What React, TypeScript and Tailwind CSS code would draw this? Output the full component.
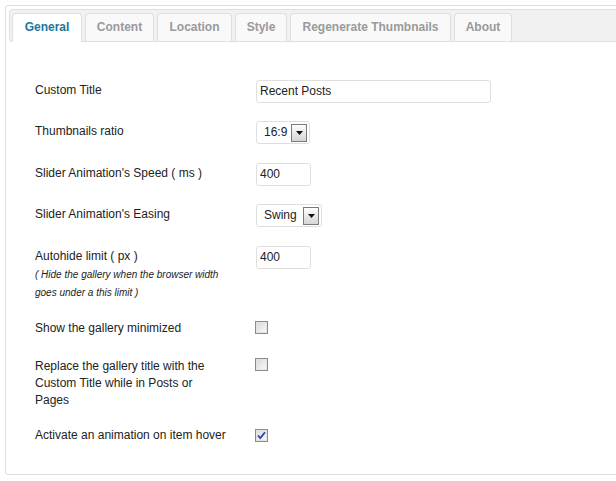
import React from 'react';

const TABS = [
  { name: 'General', w: 'w-[70px]' },
  { name: 'Content', w: 'w-[69px]' },
  { name: 'Location', w: 'w-[75px]' },
  { name: 'Style', w: 'w-[52px]' },
  { name: 'Regenerate Thumbnails', w: 'w-[161px]' },
  { name: 'About', w: 'w-[58px]' },
];

// old-school select box with the little grey dropdown button
const FakeSelect = ({ value, width }: { value: string; width: string }) => (
  <div className={`flex h-[23px] items-center justify-between rounded-[3px] border border-[#dfdfdf] bg-white pl-[7px] pr-[2px] ${width}`}>
    <span className="text-[12px] text-[#222]">{value}</span>
    <span className="flex h-[18px] w-[16px] items-center justify-center border border-[#7a7a7a] bg-gradient-to-b from-white to-[#d4d4d4]">
      <svg width="7" height="4" viewBox="0 0 7 4">
        <path d="M0 0h7L3.5 4z" fill="#111" />
      </svg>
    </span>
  </div>
);

const Checkbox = ({ checked = false }: { checked?: boolean }) => (
  <span className="flex h-[13px] w-[13px] items-center justify-center border border-[#8a8b8b] bg-gradient-to-br from-[#d8d8d8] to-[#fbfbfb] shadow-[inset_0_0_0_1px_#e4e4e4]">
    {checked && (
      <svg width="9" height="9" viewBox="0 0 9 9">
        <path d="M1 4.5 L3.3 7 L8 1.2" fill="none" stroke="#2b45a6" strokeWidth="1.8" />
      </svg>
    )}
  </span>
);

const TextInput = ({ value, width }: { value: string; width: string }) => (
  <div className={`flex h-[23px] items-center rounded-[3px] border border-[#dfdfdf] bg-white pl-[3px] text-[12px] text-[#222] ${width}`}>
    {value}
  </div>
);

export default function App() {
  return (
    <div className="h-[481px] w-[616px] overflow-hidden bg-white font-['Liberation_Sans',Arial,sans-serif] text-[12px] leading-[17px] text-[#222]">
      <div className="ml-[5px] mt-[5px] h-[470px] w-[640px] rounded-[3px] border border-[#dfdfdf] p-[3px]">
        {/* tab strip */}
        <div className="flex h-[33px] items-end gap-[3px] rounded-[3px] border border-[#dfdfdf] bg-[#f1f1f1] pl-[2px]">
          {TABS.map((t, i) =>
            i === 0 ? (
              <div
                key={t.name}
                className={`-mb-px flex h-[29px] items-center justify-center rounded-t-[4px] border border-b-0 border-[#dfdfdf] bg-white pb-px font-bold text-[#21759b] ${t.w}`}
              >
                {t.name}
              </div>
            ) : (
              <div
                key={t.name}
                className={`flex h-[28px] items-center justify-center whitespace-nowrap rounded-t-[4px] border border-b-0 border-[#dfdfdf] bg-[#f9f9f9] font-bold text-[#9a9a9a] ${t.w}`}
              >
                {t.name}
              </div>
            )
          )}
        </div>

        {/* settings rows */}
        <div className="mt-[38px] pl-[26px]">
          <div className="flex h-[41px]">
            <div className="w-[221px] pr-[31px] pt-[2px]">Custom Title</div>
            <TextInput value="Recent Posts" width="w-[235px]" />
          </div>

          <div className="flex h-[42px]">
            <div className="w-[221px] pr-[31px] pt-[2px]">Thumbnails ratio</div>
            <FakeSelect value="16:9" width="w-[54px]" />
          </div>

          <div className="flex h-[41px]">
            <div className="w-[221px] pr-[31px] pt-[2px]">Slider Animation's Speed ( ms )</div>
            <TextInput value="400" width="w-[55px]" />
          </div>

          <div className="flex h-[42px]">
            <div className="w-[221px] pr-[31px] pt-[2px]">Slider Animation's Easing</div>
            <FakeSelect value="Swing" width="w-[66px]" />
          </div>

          <div className="flex h-[74px]">
            <div className="w-[221px] pr-[31px] pt-[2px]">
              <div>Autohide limit ( px )</div>
              <div className="pt-[1px] text-[10px] italic leading-[18px]">
                ( Hide the gallery when the browser width goes under a this limit )
              </div>
            </div>
            <TextInput value="400" width="w-[55px]" />
          </div>

          <div className="flex h-[38px]">
            <div className="w-[221px] pr-[31px]">Show the gallery minimized</div>
            <div className="-ml-px pt-[1px]">
              <Checkbox />
            </div>
          </div>

          <div className="flex h-[69px]">
            <div className="w-[221px] pr-[31px]">
              Replace the gallery title with the Custom Title while in Posts or Pages
            </div>
            <div className="-ml-px">
              <Checkbox />
            </div>
          </div>

          <div className="flex">
            <div className="w-[221px] whitespace-nowrap">Activate an animation on item hover</div>
            <div className="-ml-px pt-[2px]">
              <Checkbox checked />
            </div>
          </div>
        </div>
      </div>
    </div>
  );
}
